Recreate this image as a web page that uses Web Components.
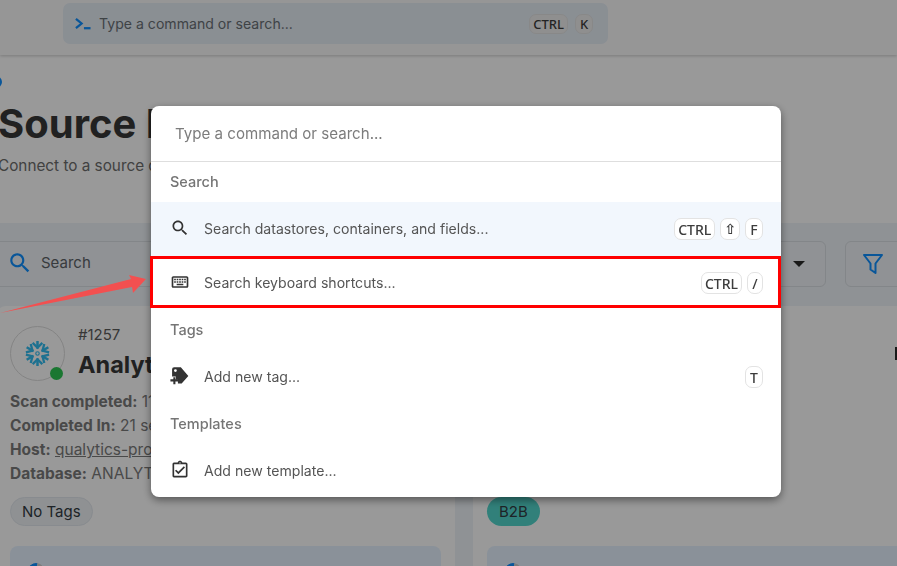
<!DOCTYPE html>
<html lang="en">
<head>
<meta charset="utf-8">
<title>Source Datastores</title>
<style>
    html, body {
        margin: 0;
        width: 897px;
        height: 566px;
        overflow: hidden;
        background: #ffffff;
        font-family: Inter, "Noto Sans", sans-serif;
    }
</style>
</head>
<body>

<app-topbar></app-topbar>
<page-heading></page-heading>
<source-board>
    <source-card id-text="#1257" name="Analyt">
        <span slot="lines"><b>Scan completed:</b> 11</span>
        <span slot="lines"><b>Completed In:</b> 21 se</span>
        <span slot="lines"><b>Host:</b> <u>qualytics-pro</u></span>
        <span slot="lines"><b>Database:</b> ANALYTI</span>
        <tag-chip slot="tag">No Tags</tag-chip>
    </source-card>
    <source-card>
        <tag-chip slot="tag" kind="teal">B2B</tag-chip>
    </source-card>
</source-board>

<modal-scrim></modal-scrim>

<command-palette>
    <palette-label>Search</palette-label>
    <palette-item active icon="search">Search datastores, containers, and fields...
        <kbd-key slot="keys">CTRL</kbd-key><kbd-key slot="keys" style="font-family: 'DejaVu Sans', sans-serif; font-weight: 700; min-width: 19px;">⇧</kbd-key><kbd-key slot="keys">F</kbd-key>
    </palette-item>
    <palette-item icon="keyboard">Search keyboard shortcuts...
        <kbd-key slot="keys">CTRL</kbd-key><kbd-key slot="keys" style="min-width: 16px;">/</kbd-key>
    </palette-item>
    <palette-label>Tags</palette-label>
    <palette-item icon="tag">Add new tag...
        <kbd-key slot="keys">T</kbd-key>
    </palette-item>
    <palette-label>Templates</palette-label>
    <palette-item icon="template">Add new template...</palette-item>
</command-palette>

<callout-mark></callout-mark>

<script>
    const ICONS = {
        search: '<path d="M15.5 14h-.79l-.28-.27C15.41 12.59 16 11.11 16 9.5 16 5.91 13.09 3 9.5 3S3 5.91 3 9.5 5.91 16 9.5 16c1.61 0 3.09-.59 4.23-1.57l.27.28v.79l5 4.99L20.49 19l-4.99-5zm-6 0C7.01 14 5 11.99 5 9.5S7.01 5 9.5 5 14 7.01 14 9.5 11.99 14 9.5 14z"/>',
        keyboard: '<path d="M20 7v10H4V7h16m0-2H4c-1.1 0-1.99.9-1.99 2L2 17c0 1.1.9 2 2 2h16c1.1 0 2-.9 2-2V7c0-1.1-.9-2-2-2zm-9 3h2v2h-2zm0 3h2v2h-2zM8 8h2v2H8zm0 3h2v2H8zm-3 0h2v2H5zm0-3h2v2H5zm3 6h8v2H8zm6-3h2v2h-2zm0-3h2v2h-2zm3 3h2v2h-2zm0-3h2v2h-2z"/>',
        tag: '<path fill-rule="evenodd" d="M2.5 4A2.5 2.5 0 0 1 5 1.500h8l9 10.500-8 9H9.500v-4.500H7V12.500H2.500zM6.500 3.800a1.700 1.700 0 1 0 0 3.400 1.700 1.700 0 0 0 0-3.400z"/><path d="M4 13.500h2.500V16H10v2.500H6.500V22H4v-3.500H.5V16H4z"/>',
        template: '<path d="M18 9l-1.41-1.42L10 14.17l-2.59-2.58L6 13l4 4zm1-6h-4.18C14.4 1.84 13.3 1 12 1c-1.3 0-2.4.84-2.82 2H5c-.14 0-.27.01-.4.04-.39.08-.74.28-1.01.55-.18.18-.33.4-.43.64-.1.23-.16.49-.16.77v14c0 .27.06.54.16.78s.25.45.43.64c.27.27.62.47 1.01.55.13.02.26.03.4.03h14c1.1 0 2-.9 2-2V5c0-1.1-.9-2-2-2zm-7-.25c.41 0 .75.34.75.75s-.34.75-.75.75-.75-.34-.75-.75.34-.75.75-.75zM19 19H5V5h14v14z"/>'
    };

    // Six rotated arms make up the snowflake logo
    const SNOWFLAKE_ARMS = [0, 60, 120, 180, 240, 300].map((angle) => `
        <g transform="rotate(${angle})">
            <path d="M0 -13 V-5"/>
            <path d="M-5 -11 L0 -6 L5 -11" stroke-width="2.400"/>
        </g>`).join('');

    // Small helper so each class only has to describe its own shadow content
    class ShadowElement extends HTMLElement {
        constructor() {
            super();
            this.attachShadow({ mode: 'open' });
        }
        connectedCallback() {
            this.shadowRoot.innerHTML = this.markup();
        }
    }

    class KbdKey extends ShadowElement {
        markup() {
            return `
            <style>
                :host {
                    display: inline-flex;
                    align-items: center;
                    justify-content: center;
                    box-sizing: border-box;
                    height: 22px;
                    min-width: 18px;
                    padding: 0 3px;
                    border: 1px solid #e3e3e3;
                    border-radius: 7px;
                    background: var(--key-bg, #ffffff);
                    color: #3c3c3c;
                    font-size: 14px;
                    font-weight: 500;
                    font-family: "Noto Sans", sans-serif;
                }
            </style>
            <slot></slot>`;
        }
    }

    class TagChip extends ShadowElement {
        markup() {
            const teal = this.getAttribute('kind') === 'teal';
            return `
            <style>
                :host {
                    display: inline-flex;
                    align-items: center;
                    box-sizing: border-box;
                    height: 29px;
                    padding: 0 ${teal ? 12 : 11}px;
                    border-radius: 15px;
                    font-size: 15px;
                    background: ${teal ? '#52d6cc' : '#eef2f6'};
                    color: #333b42;
                    ${teal ? '' : 'border: 1px solid #e3e8ee;'}
                }
            </style>
            <slot></slot>`;
        }
    }

    class AppTopbar extends ShadowElement {
        markup() {
            return `
            <style>
                :host {
                    display: block;
                    box-sizing: border-box;
                    height: 55px;
                    padding: 3px 0 0 63px;
                    background: #fbfbfb;
                    box-shadow: 0 1px 3px rgba(0, 0, 0, 0.2);
                    position: relative;
                    --key-bg: #efefef;
                }
                .box {
                    display: flex;
                    align-items: center;
                    width: 545px;
                    height: 41px;
                    box-sizing: border-box;
                    padding: 0 15px 0 12px;
                    border-radius: 7px;
                    background: #e6eef6;
                    color: #6a7075;
                    font-size: 14.1px;
                }
                svg { width: 16px; height: 13px; margin-right: 8px; }
                .grow { flex: 1; }
                .keys { display: flex; gap: 7px; }
                .keys kbd-key { height: 20px; font-size: 13px; }
            </style>
            <div class="box">
                <svg viewBox="0 0 17 13" fill="none" stroke="#0f8fff" stroke-width="2.400">
                    <path d="M1 1.500 L7 6.500 L1 11.500"/><path d="M9.500 11.500 H16.500"/>
                </svg>
                <span class="grow">Type a command or search...</span>
                <span class="keys"><kbd-key>CTRL</kbd-key><kbd-key>K</kbd-key></span>
            </div>`;
        }
    }

    class PageHeading extends ShadowElement {
        markup() {
            return `
            <style>
                :host {
                    display: block;
                    box-sizing: border-box;
                    height: 168px;
                    padding-top: 21px;
                    margin-left: -2px;
                    background: #ffffff;
                }
                .crumb {
                    display: block;
                    width: 12px;
                    height: 12px;
                    margin-left: -8px;
                    border: 2px solid #0f8fff;
                    box-sizing: border-box;
                    border-radius: 50%;
                }
                h1 {
                    margin: 13px 0 0;
                    font-size: 40px;
                    line-height: 46px;
                    font-weight: 700;
                    color: #383838;
                }
                p {
                    margin: 9px 0 0;
                    font-size: 15.3px;
                    line-height: 20px;
                    color: #6d6d6d;
                }
            </style>
            <span class="crumb"></span>
            <h1>Source D</h1>
            <p>Connect to a source d</p>`;
        }
    }

    class SourceBoard extends ShadowElement {
        markup() {
            return `
            <style>
                :host {
                    display: block;
                    height: 343px;
                    background: #eef3f8;
                    overflow: hidden;
                }
                .bar {
                    display: flex;
                    gap: 19px;
                    height: 83px;
                    box-sizing: border-box;
                    padding-top: 18px;
                    margin-left: -10px;
                    margin-right: -40px;
                }
                .field {
                    display: flex;
                    align-items: center;
                    box-sizing: border-box;
                    height: 46px;
                    border: 1px solid #dadfe4;
                    border-radius: 6px;
                    background: #f0f4f8;
                }
                .find { flex: 1; padding: 0 0 4px 16px; color: #5e6368; font-size: 15px; }
                .find svg { width: 26px; height: 26px; margin: 2px 8px 0 0; fill: #0f8fff; }
                .sort { width: 60px; justify-content: flex-end; padding-right: 20px; }
                .caret { width: 0; height: 0; border: 6px solid transparent; border-top-color: #2a2a2a; border-bottom: 0; }
                .filter { width: 92px; padding-left: 16px; }
                .filter svg { width: 22px; height: 22px; }
                .cards {
                    display: grid;
                    grid-template-columns: 459px 500px;
                    gap: 18px;
                    margin-left: -4px;
                }
            </style>
            <div class="bar">
                <div class="field find">
                    <svg viewBox="0 0 24 24">${ICONS.search}</svg>Search
                </div>
                <div class="field sort"><span class="caret"></span></div>
                <div class="field filter">
                    <svg viewBox="0 0 22 22" fill="none" stroke="#0f8fff" stroke-width="2" stroke-linejoin="round">
                        <path d="M2 2 H20 L13.500 10.500 V20 L8.500 16.500 V10.500 Z"/>
                    </svg>
                </div>
            </div>
            <div class="cards"><slot></slot></div>`;
        }
    }

    class SourceCard extends ShadowElement {
        markup() {
            const name = this.getAttribute('name');
            const head = name ? `
                <div class="head">
                    <div class="logo">
                        <svg viewBox="-14 -14 28 28" fill="none" stroke="#33bdf0" stroke-width="2.600">
                            ${SNOWFLAKE_ARMS}
                            <circle r="1.800" stroke-width="1.200"/>
                        </svg>
                        <span class="dot"></span>
                    </div>
                    <div>
                        <div class="num">${this.getAttribute('id-text')}</div>
                        <div class="name">${name}</div>
                    </div>
                </div>` : '<div class="head edge"><span class="stem"></span></div>';
            return `
            <style>
                :host {
                    display: block;
                    box-sizing: border-box;
                    height: 270px;
                    padding: 20px 14px 0 14px;
                    border-radius: 10px 10px 0 0;
                    background: #ffffff;
                    font-size: 15.5px;
                    color: #7a7a7a;
                }
                .head { display: flex; gap: 13px; height: 56px; }
                .edge { justify-content: flex-end; padding-top: 21px; box-sizing: border-box; }
                .stem { width: 4px; height: 13px; background: #2c2c2c; margin-right: 60px; }
                .logo {
                    position: relative;
                    flex: none;
                    width: 55px;
                    height: 55px;
                    box-sizing: border-box;
                    border: 1px solid #dcdcdc;
                    border-radius: 50%;
                    display: flex;
                    align-items: center;
                    justify-content: center;
                }
                .logo svg { width: 27px; height: 27px; margin-left: -1px; }
                .dot {
                    position: absolute;
                    right: 1px;
                    bottom: 0;
                    width: 13px;
                    height: 13px;
                    border-radius: 50%;
                    background: #2cc653;
                }
                .num { font-size: 15px; line-height: 18px; color: #5c5c5c; }
                .name { font-size: 23.5px; line-height: 34px; font-weight: 700; color: #383838; margin-top: 4px; }
                .lines { display: flex; flex-direction: column; height: 96px; margin-top: 8px; line-height: 24px; }
                .lines ::slotted(span) { display: block; white-space: nowrap; }
                .tag { margin-top: 11px; height: 29px; }
                .panel {
                    position: relative;
                    height: 60px;
                    margin-top: 20px;
                    border-radius: 8px 8px 0 0;
                    background: #e6f2ff;
                    overflow: hidden;
                }
                .panel::before {
                    content: "";
                    position: absolute;
                    left: 17px;
                    top: 17px;
                    width: 18px;
                    height: 18px;
                    box-sizing: border-box;
                    border: 3px solid #cfcfcf;
                    border-top-color: #0f8fff;
                    border-radius: 50%;
                    transform: rotate(-35deg);
                }
            </style>
            ${head}
            <div class="lines"><slot name="lines"></slot></div>
            <div class="tag"><slot name="tag"></slot></div>
            <div class="panel"></div>`;
        }
    }

    class ModalScrim extends ShadowElement {
        markup() {
            return `
            <style>
                :host {
                    display: block;
                    position: fixed;
                    inset: 0;
                    background: rgba(0, 0, 0, 0.4);
                }
            </style>`;
        }
    }

    class CommandPalette extends ShadowElement {
        markup() {
            return `
            <style>
                :host {
                    display: block;
                    position: fixed;
                    left: 151px;
                    top: 106px;
                    width: 630px;
                    height: 391px;
                    border-radius: 8px;
                    background: #ffffff;
                    overflow: hidden;
                    box-shadow: 0 3px 8px rgba(0, 0, 0, 0.45);
                }
                .input {
                    box-sizing: border-box;
                    height: 56px;
                    padding: 17px 0 0 24px;
                    border-bottom: 1px solid #dedede;
                    font-size: 15.1px;
                    line-height: 22px;
                    color: #7c7c7c;
                }
            </style>
            <div class="input">Type a command or search...</div>
            <slot></slot>`;
        }
    }

    class PaletteLabel extends ShadowElement {
        markup() {
            return `
            <style>
                :host {
                    display: flex;
                    align-items: center;
                    box-sizing: border-box;
                    height: 40px;
                    padding: 0 0 2px 19px;
                    font-size: 14.5px;
                    font-weight: 500;
                    color: #757575;
                }
            </style>
            <slot></slot>`;
        }
    }

    class PaletteItem extends ShadowElement {
        markup() {
            const icon = ICONS[this.getAttribute('icon')];
            return `
            <style>
                :host {
                    display: flex;
                    align-items: center;
                    box-sizing: border-box;
                    height: 54px;
                    padding: 0 18px 2px 19px;
                    font-size: 14.1px;
                    color: #555555;
                    background: ${this.hasAttribute('active') ? '#f2f7fd' : 'transparent'};
                }
                svg { flex: none; width: 20px; height: 20px; fill: #333333; margin-right: 14px; }
                .text { flex: 1; white-space: nowrap; }
                .keys { display: flex; gap: 5px; margin-top: 2px; }
            </style>
            <svg viewBox="0 0 24 24">${icon}</svg>
            <span class="text"><slot></slot></span>
            <span class="keys"><slot name="keys"></slot></span>`;
        }
    }

    // The red annotation drawn on top of the screenshot
    class CalloutMark extends ShadowElement {
        markup() {
            return `
            <style>
                :host {
                    display: block;
                    position: fixed;
                    inset: 0;
                    pointer-events: none;
                }
                .box {
                    position: absolute;
                    left: 150px;
                    top: 256px;
                    width: 631px;
                    height: 52px;
                    box-sizing: border-box;
                    border: 3px solid #ff0000;
                }
                svg { position: absolute; left: 0; top: 270px; width: 150px; height: 50px; }
            </style>
            <div class="box"></div>
            <svg viewBox="0 0 150 50">
                <path d="M0 43 L131 9 L129 5 L146 9 L133 23 L132 17 Z" fill="#f25050"/>
            </svg>`;
        }
    }

    customElements.define('kbd-key', KbdKey);
    customElements.define('tag-chip', TagChip);
    customElements.define('app-topbar', AppTopbar);
    customElements.define('page-heading', PageHeading);
    customElements.define('source-board', SourceBoard);
    customElements.define('source-card', SourceCard);
    customElements.define('modal-scrim', ModalScrim);
    customElements.define('command-palette', CommandPalette);
    customElements.define('palette-label', PaletteLabel);
    customElements.define('palette-item', PaletteItem);
    customElements.define('callout-mark', CalloutMark);
</script>
</body>
</html>
